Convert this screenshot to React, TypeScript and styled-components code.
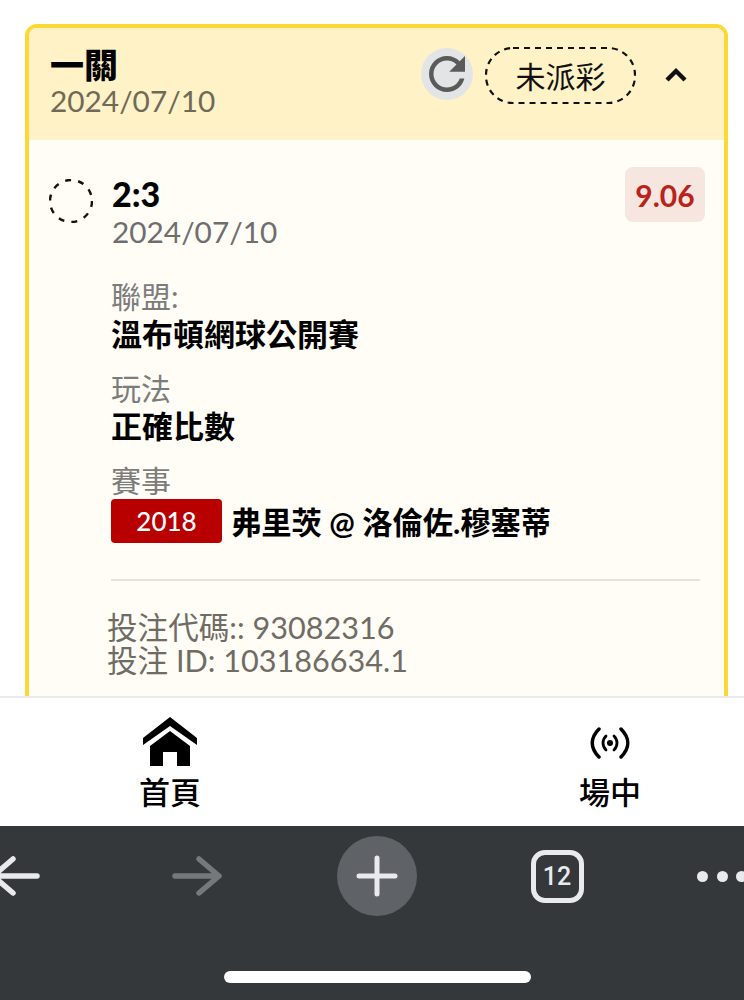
import React from 'react';
import styled, { createGlobalStyle } from 'styled-components';

const GlobalStyle = createGlobalStyle`
  html, body { margin: 0; padding: 0; background: #fff; }
  * { box-sizing: border-box; }
`;

const fontStack = `Lato, 'Noto Sans CJK TC', sans-serif`;

const Screen = styled.div`
  width: 744px;
  height: 1000px;
  display: flex;
  flex-direction: column;
  overflow: hidden;
  font-family: ${fontStack};
  background: #fff;
`;

const Content = styled.main`
  flex: 1;
  min-height: 0;
  overflow: hidden;
  padding: 24px 16px 0 25px;
`;

const Card = styled.section`
  border: 4px solid #fdd835;
  border-radius: 12px;
  overflow: hidden;
  background: #fffdf5;
`;

const CardHeader = styled.header`
  height: 112px;
  padding: 0 36px 2px 21px;
  background: #fff2c6;
  display: flex;
  align-items: center;
  justify-content: space-between;
`;

const Title = styled.div`
  font-size: 34px;
  line-height: 36px;
  font-weight: 900;
  color: #000;
`;

const HeaderDate = styled.div`
  font-size: 29.8px;
  line-height: 36px;
  color: #6f6a58;
`;

const Actions = styled.div`
  display: flex;
  align-items: center;
  margin-top: -16px;
`;

const RefreshButton = styled.div`
  width: 52px;
  height: 52px;
  border-radius: 50%;
  background: #e3e4e6;
  display: flex;
  align-items: center;
  justify-content: center;
  margin: 0 12px 2px 0;
  svg {
    flex: none;
  }
`;

const StatusPill = styled.div`
  position: relative;
  width: 151px;
  height: 57px;
  display: flex;
  align-items: center;
  justify-content: center;
  font-size: 30px;
  color: #111;
  margin-right: 28px;
  svg {
    position: absolute;
    inset: 0;
  }
`;

const CardBody = styled.div`
  padding: 27px 19px 0 20px;
`;

const BetRow = styled.div`
  display: flex;
  align-items: flex-start;
`;

const StatusCircle = styled.svg`
  width: 44px;
  height: 44px;
  flex: none;
  margin: 12px 19px 0 0;
`;

const BetMain = styled.div`
  flex: 1;
  padding-top: 7px;
`;

const Score = styled.div`
  font-size: 34px;
  line-height: 40px;
  font-weight: 900;
  color: #000;
`;

const BetDate = styled.div`
  font-size: 29.8px;
  line-height: 36px;
  color: #6e6e6e;
`;

const OddsBadge = styled.div`
  width: 80px;
  height: 55px;
  border-radius: 8px;
  background: #f6e6df;
  color: #b8231b;
  font-size: 30px;
  font-weight: 700;
  display: flex;
  align-items: center;
  justify-content: center;
`;

const Details = styled.div`
  padding: 27px 0 0 62px;
`;

const Label = styled.div`
  font-size: 30px;
  line-height: 38px;
  margin-bottom: -1px;
  color: #7c7c7c;
`;

const Value = styled.div`
  font-size: 31px;
  line-height: 40px;
  font-weight: 700;
  color: #000;
  margin-bottom: 15px;
`;

const MatchRow = styled.div`
  display: flex;
  align-items: center;
  gap: 9px;
  margin-top: -2px;
  font-size: 30.3px;
  line-height: 44px;
  font-weight: 700;
  color: #000;
`;

const MatchTag = styled.span`
  width: 111px;
  height: 44px;
  border-radius: 4px;
  background: #b80000;
  color: #fff;
  font-size: 26px;
  font-weight: 500;
  display: flex;
  align-items: center;
  justify-content: center;
`;

const MatchName = styled.span`
  padding-top: 3px;
`;

const Divider = styled.hr`
  height: 2px;
  margin: 35px 5px 0 62px;
  border: 0;
  background: #e6e2da;
`;

const Codes = styled.div`
  padding: 30px 0 40px 58px;
  font-size: 30.6px;
  line-height: 33px;
  color: #6f6c65;
`;

const BottomNav = styled.nav`
  flex: none;
  height: 130px;
  border-top: 2px solid #e9e9e9;
  background: #fff;
  display: flex;
  justify-content: space-between;
  padding: 18px 104px 0 140px;
`;

const NavItem = styled.div`
  width: 60px;
  display: flex;
  flex-direction: column;
  align-items: center;
`;

const NavIconSlot = styled.div<{ $raised?: boolean }>`
  height: 54px;
  display: flex;
  align-items: center;
  justify-content: center;
  margin-bottom: 2px;
  padding-bottom: ${(p) => (p.$raised ? '3px' : '0')};
  svg {
    flex: none;
  }
`;

const NavLabel = styled.div`
  font-size: 31px;
  line-height: 40px;
  font-weight: 500;
  color: #000;
  white-space: nowrap;
`;

const BrowserBar = styled.div`
  flex: none;
  height: 174px;
  background: #35383b;
  overflow: hidden;
`;

const BrowserTools = styled.div`
  width: 900px;
  height: 100px;
  margin-left: -73px;
  display: grid;
  grid-template-columns: repeat(5, 180px);
  align-items: center;
  justify-items: center;
`;

const BackSlot = styled.div`
  display: flex;
  margin-right: 4px;
`;

const NewTab = styled.div`
  width: 80px;
  height: 80px;
  border-radius: 50%;
  background: #5f6368;
  display: flex;
  align-items: center;
  justify-content: center;
`;

const TabCount = styled.div`
  width: 53px;
  height: 53px;
  border: 5px solid #e8eaed;
  border-radius: 14px;
  color: #e8eaed;
  font-size: 25px;
  font-weight: 500;
  font-family: Roboto, sans-serif;
  display: flex;
  align-items: center;
  justify-content: center;
`;

const MoreDots = styled.div`
  display: flex;
  gap: 8.5px;
  margin-right: 30px;
`;

const Dot = styled.span`
  width: 11px;
  height: 11px;
  flex: none;
  border-radius: 50%;
  background: #e8eaed;
`;

const HomeIndicator = styled.div`
  width: 307px;
  height: 12px;
  margin: 45px 0 0 224px;
  border-radius: 6px;
  background: #fff;
`;

const Arrow = ({ color, flip }: { color: string; flip?: boolean }) => (
  <svg width="50" height="40" viewBox="0 0 50 40" fill="none" style={flip ? { transform: 'scaleX(-1)' } : undefined}>
    <path d="M3 20h44M27 3l20 17-20 17" stroke={color} strokeWidth="5.5" strokeLinecap="round" strokeLinejoin="round" />
  </svg>
);

export default function App() {
  return (
    <Screen>
      <GlobalStyle />
      <Content>
        <Card>
          <CardHeader>
            <div>
              <Title>一關</Title>
              <HeaderDate>2024/07/10</HeaderDate>
            </div>
            <Actions>
              <RefreshButton>
                <svg width="54" height="54" viewBox="0 0 24 24" fill="#5a5a5a">
                  <path d="M17.65 6.35C16.2 4.9 14.21 4 12 4c-4.42 0-7.99 3.58-7.99 8s3.57 8 7.99 8c3.73 0 6.84-2.55 7.73-6h-2.08c-.82 2.33-3.04 4-5.65 4-3.31 0-6-2.69-6-6s2.69-6 6-6c1.66 0 3.14.69 4.22 1.78L13 11h7V4l-2.35 2.35z" />
                </svg>
              </RefreshButton>
              <StatusPill>
                <svg width="151" height="57" viewBox="0 0 151 57" fill="none">
                  <rect x="1" y="1" width="149" height="55" rx="27" stroke="#111" strokeWidth="2.2" strokeDasharray="6 5" />
                </svg>
                未派彩
              </StatusPill>
              <svg width="24" height="16" viewBox="0 0 24 16" fill="none">
                <path d="M3 13l9-9 9 9" stroke="#111" strokeWidth="4.4" />
              </svg>
            </Actions>
          </CardHeader>
          <CardBody>
            <BetRow>
              <StatusCircle viewBox="0 0 44 44" fill="none">
                <circle cx="22" cy="22" r="21" stroke="#111" strokeWidth="2.4" strokeDasharray="6 7.2" />
              </StatusCircle>
              <BetMain>
                <Score>2:3</Score>
                <BetDate>2024/07/10</BetDate>
              </BetMain>
              <OddsBadge>9.06</OddsBadge>
            </BetRow>
            <Details>
              <Label>聯盟:</Label>
              <Value>溫布頓網球公開賽</Value>
              <Label>玩法</Label>
              <Value>正確比數</Value>
              <Label>賽事</Label>
              <MatchRow>
                <MatchTag>2018</MatchTag>
                <MatchName>弗里茨 @ 洛倫佐.穆塞蒂</MatchName>
              </MatchRow>
            </Details>
            <Divider />
            <Codes>
              <div>投注代碼:: 93082316</div>
              <div>投注 ID: 103186634.1</div>
            </Codes>
          </CardBody>
        </Card>
      </Content>
      <BottomNav>
        <NavItem>
          <NavIconSlot $raised>
            <svg width="54" height="49" viewBox="0 0 54 49" fill="#000">
              <path d="M27 0L54 21v7L27 9 0 28v-7z" />
              <path d="M27 14L47 29v20H34V35H20v14H7V29z" />
            </svg>
          </NavIconSlot>
          <NavLabel>首頁</NavLabel>
        </NavItem>
        <NavItem>
          <NavIconSlot>
            <svg width="40" height="32" viewBox="0 0 40 32" fill="none" stroke="#000" strokeLinecap="round">
              <path d="M9 2C0 11 0 21 9 30M31 2c9 9 9 19 0 28" strokeWidth="3.5" />
              <path d="M16 9c-4 4-4 10 0 14M24 9c4 4 4 10 0 14" strokeWidth="2.8" />
              <circle cx="20" cy="16" r="3" fill="#000" stroke="none" />
            </svg>
          </NavIconSlot>
          <NavLabel>場中</NavLabel>
        </NavItem>
      </BottomNav>
      <BrowserBar>
        <BrowserTools>
          <BackSlot>
            <Arrow color="#e8eaed" flip />
          </BackSlot>
          <Arrow color="#76797c" />
          <NewTab>
            <svg width="42" height="42" viewBox="0 0 42 42" fill="none">
              <path d="M21 3v36M3 21h36" stroke="#e8eaed" strokeWidth="5" strokeLinecap="round" />
            </svg>
          </NewTab>
          <TabCount>12</TabCount>
          <MoreDots>
            <Dot />
            <Dot />
            <Dot />
          </MoreDots>
        </BrowserTools>
        <HomeIndicator />
      </BrowserBar>
    </Screen>
  );
}
